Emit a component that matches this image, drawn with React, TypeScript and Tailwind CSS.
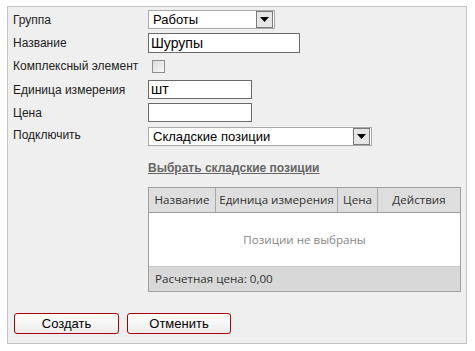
import React from "react";

function Arrow() {
  return (
    <div className="flex h-[17px] w-[17px] items-center justify-center border border-[#7a7a7a] bg-[#e6e6e6]">
      <svg width="9" height="5" viewBox="0 0 9 5">
        <path d="M0 0h9L4.5 5z" fill="#000" />
      </svg>
    </div>
  );
}

function Row({ label, children, h = "h-[19px]", mt }: { label: string; children: React.ReactNode; h?: string; mt: string }) {
  return (
    <div className={`flex items-center ${h} ${mt}`}>
      <div className="w-[135px] shrink-0 text-[12px] text-[#222]">{label}</div>
      {children}
    </div>
  );
}

export default function App() {
  return (
    <div className="h-[351px] w-[475px] bg-white pl-[7px] pt-[6px] font-['Liberation_Sans',Arial,sans-serif]">
      <div className="flex h-[338px] w-[460px] flex-col border border-[#c4c4c4] bg-[#efefef] pl-[5px]">
        <Row label="Группа" mt="mt-[3px]">
          <div className="flex h-[19px] w-[127px] items-center justify-between border border-[#a9a9a9] bg-white pl-[4px] pr-[1px] text-[13px] text-black">
            Работы
            <Arrow />
          </div>
        </Row>
        <Row label="Название" h="h-[20px]" mt="mt-[4px]">
          <div className="flex h-[20px] w-[152px] items-center border border-[#6a6a6a] bg-white pl-[2px] text-[14px] text-black">
            Шурупы
          </div>
        </Row>
        <Row label="Комплексный элемент" h="h-[20px]" mt="mt-[3px]">
          <div className="ml-[4px] h-[13px] w-[13px] border border-[#8f8f8f] bg-gradient-to-br from-[#dcdcdc] to-[#f8f8f8]" />
        </Row>
        <Row label="Единица измерения" mt="mt-[4px]">
          <div className="flex h-[19px] w-[104px] items-center border border-[#6a6a6a] bg-white pl-[2px] text-[14px] text-black">
            шт
          </div>
        </Row>
        <Row label="Цена" mt="mt-[4px]">
          <div className="h-[19px] w-[104px] border border-[#6a6a6a] bg-white" />
        </Row>
        <div className="mt-[5px] flex h-[19px]">
          <div className="-mt-[1px] w-[135px] shrink-0 text-[12px] text-[#222]">Подключить</div>
          <div className="flex h-[19px] w-[224px] items-center justify-between border border-[#a9a9a9] bg-white pl-[4px] pr-[1px] text-[13px] text-black">
            Складские позиции
            <Arrow />
          </div>
        </div>
        <div className="ml-[135px] mt-[13px] text-[12px] font-bold text-[#666] underline">
          Выбрать складские позиции
        </div>
        <div className="ml-[135px] mt-[10px] w-[313px] border border-[#a0a0a0] font-['Open_Sans',sans-serif] text-[11.6px]">
          <div className="flex h-[25px] border-b border-[#a0a0a0] bg-[#dedede] text-[#333]">
            <div className="flex w-[67px] items-center justify-center border-r border-[#a8a8a8]">Название</div>
            <div className="flex w-[122px] items-center justify-center border-r border-[#a8a8a8]">Единица измерения</div>
            <div className="flex w-[40px] items-center justify-center border-r border-[#a8a8a8]">Цена</div>
            <div className="flex flex-1 items-center justify-center">Действия</div>
          </div>
          <div className="flex h-[53px] items-center justify-center bg-white text-[#888]">Позиции не выбраны</div>
          <div className="flex h-[25px] items-center border-t border-[#c8c8c8] bg-[#d8d8d8] pl-[6px] text-[#333]">
            Расчетная цена: 0,00
          </div>
        </div>
        <div className="mt-[21px] flex gap-[8px] pl-[1px] text-[13px] text-black">
          <button className="h-[21px] w-[105px] rounded-[3px] border border-[#a00] bg-gradient-to-b from-white to-[#ececec]">Создать</button>
          <button className="h-[21px] w-[104px] rounded-[3px] border border-[#a00] bg-gradient-to-b from-white to-[#ececec]">Отменить</button>
        </div>
      </div>
    </div>
  );
}
